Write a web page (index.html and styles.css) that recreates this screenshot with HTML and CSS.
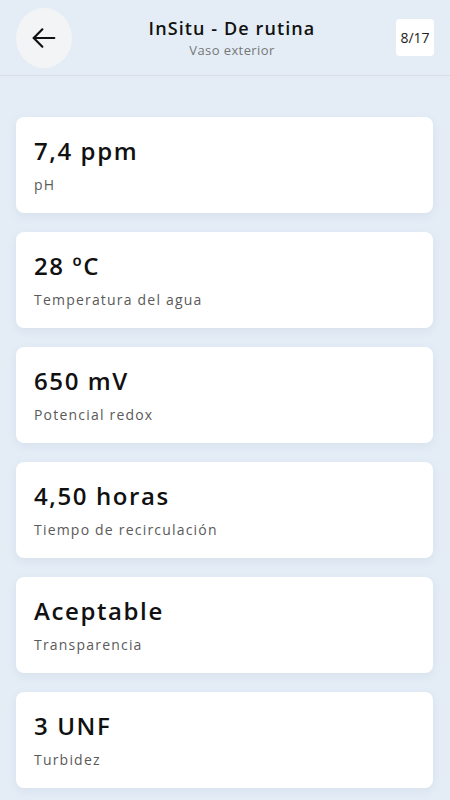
FILE: index.html
```html
<!DOCTYPE html>
<html lang="es">
<head>
    <meta charset="UTF-8">
    <meta name="viewport" content="width=device-width, initial-scale=1.0">
    <title>InSitu - De rutina</title>
    <link rel="stylesheet" href="styles.css">
</head>
<body>
    <div class="header">
        <div class="back-button">
            <svg width="26" height="26" viewBox="0 0 24 24" fill="none" stroke="#111" stroke-width="2" stroke-linecap="round" stroke-linejoin="round">
                <path d="M21.5 12H2.5"/>
                <path d="M10.5 4l-8 8 8 8"/>
            </svg>
        </div>
        <div class="header-titles">
            <h1>InSitu - De rutina</h1>
            <div class="subtitle">Vaso exterior</div>
        </div>
        <div class="counter">8/17</div>
    </div>

    <div class="container">
        <div class="card">
            <div class="card-value">7,4 ppm</div>
            <div class="card-label">pH</div>
        </div>
        <div class="card">
            <div class="card-value">28 ºC</div>
            <div class="card-label">Temperatura del agua</div>
        </div>
        <div class="card">
            <div class="card-value">650 mV</div>
            <div class="card-label">Potencial redox</div>
        </div>
        <div class="card">
            <div class="card-value">4,50 horas</div>
            <div class="card-label">Tiempo de recirculación</div>
        </div>
        <div class="card">
            <div class="card-value">Aceptable</div>
            <div class="card-label">Transparencia</div>
        </div>
        <div class="card">
            <div class="card-value">3 UNF</div>
            <div class="card-label">Turbidez</div>
        </div>
    </div>
</body>
</html>
```

FILE: styles.css
```css
:root {
    --background: #e4edf6;
    --card-bg: #ffffff;
    --text: #111111;
    --text-secondary: #5a5a5a;
    --line: #d9dee4;
}

* {
    box-sizing: border-box;
    margin: 0;
    padding: 0;
}

body {
    font-family: 'Open Sans', sans-serif;
    background: var(--background);
    color: var(--text);
    min-height: 100vh;
}

.header {
    display: flex;
    align-items: center;
    justify-content: space-between;
    height: 76px;
    padding: 0 16px;
    border-bottom: 1px solid var(--line);
}

.back-button {
    width: 56px;
    height: 60px;
    border-radius: 50%;
    background: #f3f4f5;
    display: flex;
    align-items: center;
    justify-content: center;
}

.header-titles {
    display: flex;
    flex-direction: column;
    align-items: center;
    margin-right: 4px;
}

h1 {
    font-size: 18px;
    font-weight: 600;
    line-height: 24px;
    letter-spacing: 1.1px;
}

.subtitle {
    font-size: 13px;
    color: #777;
    line-height: 18px;
    letter-spacing: 0.4px;
    margin-top: 1px;
}

.counter {
    background: var(--card-bg);
    border-radius: 4px;
    width: 38px;
    height: 37px;
    display: flex;
    align-items: center;
    justify-content: center;
    font-size: 14px;
    color: #222;
    margin-top: -1px;
}

.container {
    display: flex;
    flex-direction: column;
    gap: 19px;
    padding: 41px 17px 0 16px;
}

.card {
    background: var(--card-bg);
    border-radius: 8px;
    height: 96px;
    padding: 17px 18px;
    box-shadow: 0 3px 8px rgba(120, 140, 170, 0.12);
}

.card-value {
    font-size: 24px;
    font-weight: 600;
    line-height: 34px;
    letter-spacing: 1.6px;
}

.card-label {
    font-size: 14px;
    color: var(--text-secondary);
    margin-top: 7px;
    letter-spacing: 1.2px;
}
```
